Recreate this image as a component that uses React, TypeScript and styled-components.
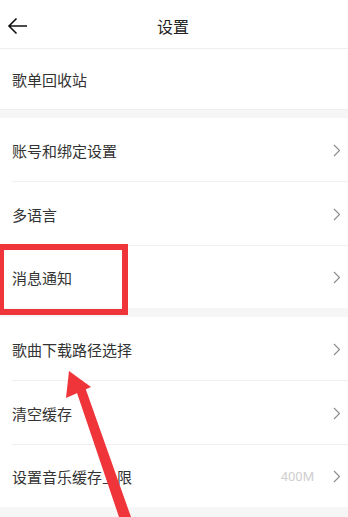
import React from "react";
import styled, { createGlobalStyle } from "styled-components";

const Global = createGlobalStyle`
  html, body { margin: 0; padding: 0; background: #fff; }
  body { font-family: "Noto Sans CJK SC", "Noto Sans", Roboto, sans-serif; -webkit-font-smoothing: antialiased; }
`;

const Page = styled.div`
  position: relative;
  width: 348px;
  height: 517px;
  overflow: hidden;
  background: #f6f6f6;
  display: flex;
  flex-direction: column;
`;

const Header = styled.div`
  height: 48px;
  background: #fff;
  border-bottom: 1px solid #eeeeee;
  display: flex;
  align-items: center;
  justify-content: center;
  position: relative;
  flex-shrink: 0;
`;

const BackBtn = styled.div`
  position: absolute;
  left: 7px;
  top: 17px;
  width: 21px;
  height: 18px;
  display: flex;
`;

const Title = styled.div`
  font-size: 16px;
  color: #222;
  line-height: 1;
  margin-top: 4px;
  margin-left: -2px;
`;

const Group = styled.div<{ $gap?: number }>`
  background: #fff;
  margin-top: ${(p) => p.$gap ?? 0}px;
  display: flex;
  flex-direction: column;
  flex-shrink: 0;
`;

const Row = styled.div<{ $h: number; $divider?: boolean; $border?: boolean }>`
  height: ${(p) => p.$h}px;
  display: flex;
  align-items: center;
  padding: 0 7px 0 12px;
  position: relative;
  ${(p) => (p.$border ? "border-bottom: 1px solid #eeeeee;" : "")}
  ${(p) =>
    p.$divider
      ? `&::after { content: ""; position: absolute; left: 12px; right: 0; bottom: 0; height: 1px; background: #f0f0f0; }`
      : ""}
`;

const Label = styled.div`
  flex: 1;
  font-size: 15px;
  color: #333;
  line-height: 1;
`;

const Value = styled.div`
  font-family: Roboto, "Noto Sans", sans-serif;
  font-size: 13px;
  color: #cfcfcf;
  margin-right: 19px;
`;

const Chevron = () => (
  <svg width="8" height="13" viewBox="0 0 8 13">
    <path d="M1 1 L6.5 6.5 L1 12" fill="none" stroke="#8a8a8a" strokeWidth="1.1" />
  </svg>
);

const Highlight = styled.div`
  position: absolute;
  left: -2px;
  top: 244px;
  width: 130px;
  height: 71px;
  box-sizing: border-box;
  border: 6.5px solid #ef343a;
  pointer-events: none;
`;

const ArrowLayer = styled.svg`
  position: absolute;
  left: 0;
  top: 0;
  pointer-events: none;
`;

type Item = { label: string; value?: string; arrow?: boolean };

const group1: Item[] = [
  { label: "账号和绑定设置", arrow: true },
  { label: "多语言", arrow: true },
  { label: "消息通知", arrow: true },
];
const group2: Item[] = [
  { label: "歌曲下载路径选择", arrow: true },
  { label: "清空缓存", arrow: true },
  { label: "设置音乐缓存上限", value: "400M", arrow: true },
];

const renderGroup = (items: Item[]) =>
  items.map((it, i) => (
    <Row key={it.label} $h={i < items.length - 1 ? 64 : 62} $divider={i < items.length - 1}>
      <Label>{it.label}</Label>
      {it.value && <Value>{it.value}</Value>}
      {it.arrow && <Chevron />}
    </Row>
  ));

export default function App() {
  return (
    <>
      <Global />
      <Page>
        <Header>
          <BackBtn>
            <svg width="21" height="18" viewBox="0 0 21 18">
              <path d="M20 9 H2 M9.5 1.5 L2 9 L9.5 16.5" fill="none" stroke="#111" strokeWidth="1.6" />
            </svg>
          </BackBtn>
          <Title>设置</Title>
        </Header>
        <Group>
          <Row $h={60} $border>
            <Label>歌单回收站</Label>
          </Row>
        </Group>
        <Group $gap={8}>{renderGroup(group1)}</Group>
        <Group $gap={9}>{renderGroup(group2)}</Group>
        <Highlight />
        <ArrowLayer width="348" height="517" viewBox="0 0 348 517">
          <polygon points="69,371 66,398 91,387" fill="#ef343a" />
          <polygon points="76,390 85,387 131,517 119,517" fill="#ef343a" />
        </ArrowLayer>
      </Page>
    </>
  );
}
